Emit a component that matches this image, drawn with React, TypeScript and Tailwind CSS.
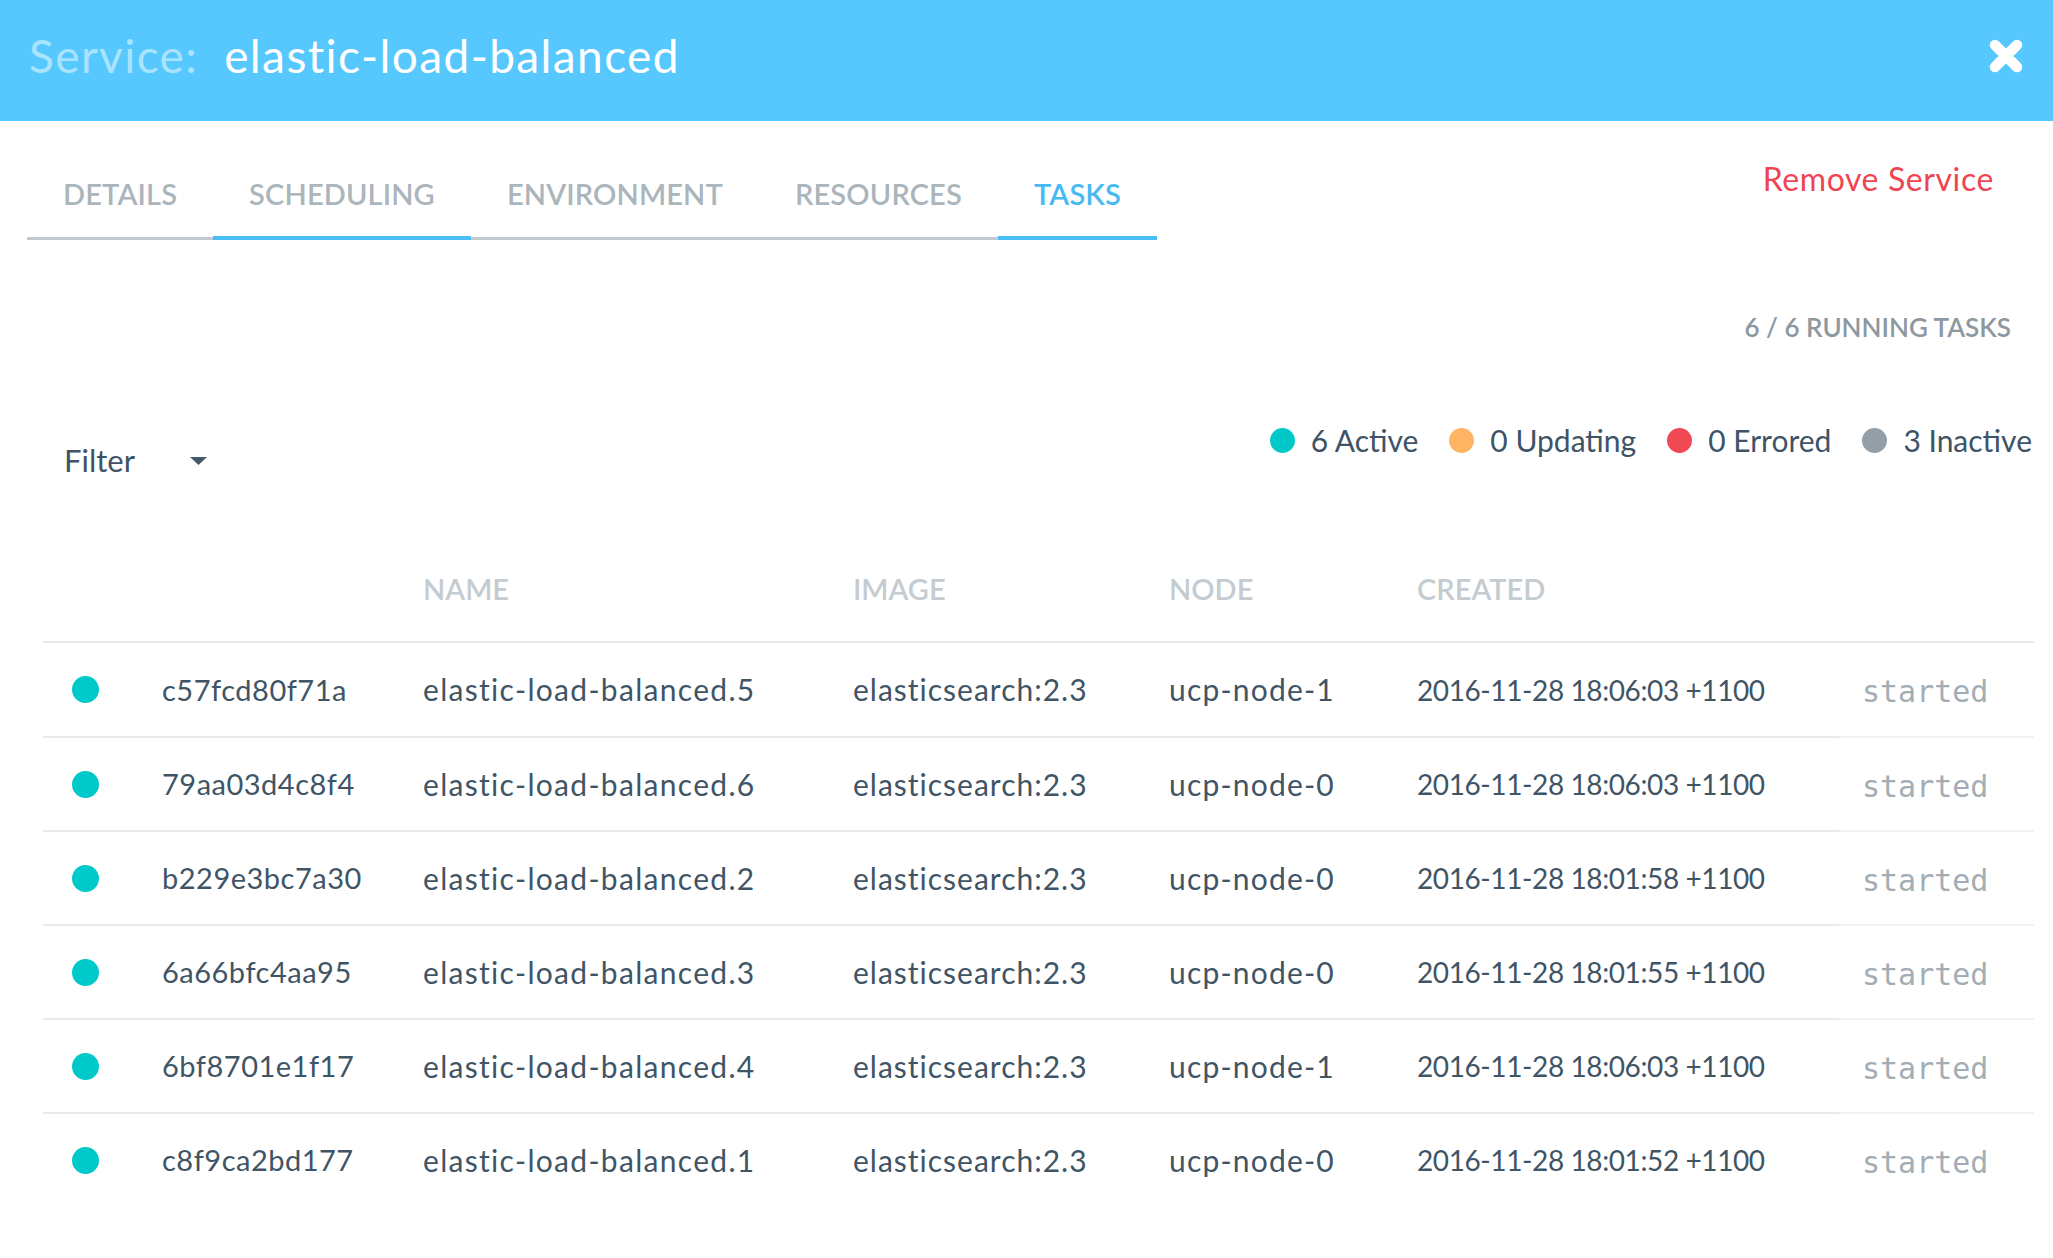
import React from "react";

const tabs = ["DETAILS", "SCHEDULING", "ENVIRONMENT", "RESOURCES", "TASKS"];

const legend = [
  { label: "6 Active", color: "bg-[#00c8c9]" },
  { label: "0 Updating", color: "bg-[#ffb463]" },
  { label: "0 Errored", color: "bg-[#f04855]" },
  { label: "3 Inactive", color: "bg-[#949ea7]" },
];

const tasks = [
  { id: "c57fcd80f71a", name: "elastic-load-balanced.5", node: "ucp-node-1", created: "2016-11-28 18:06:03 +1100" },
  { id: "79aa03d4c8f4", name: "elastic-load-balanced.6", node: "ucp-node-0", created: "2016-11-28 18:06:03 +1100" },
  { id: "b229e3bc7a30", name: "elastic-load-balanced.2", node: "ucp-node-0", created: "2016-11-28 18:01:58 +1100" },
  { id: "6a66bfc4aa95", name: "elastic-load-balanced.3", node: "ucp-node-0", created: "2016-11-28 18:01:55 +1100" },
  { id: "6bf8701e1f17", name: "elastic-load-balanced.4", node: "ucp-node-1", created: "2016-11-28 18:06:03 +1100" },
  { id: "c8f9ca2bd177", name: "elastic-load-balanced.1", node: "ucp-node-0", created: "2016-11-28 18:01:52 +1100" },
];

const cols = "grid grid-cols-[119px_261px_430px_316px_248px_422px_195px]";

const CloseIcon = () => (
  <svg width="36" height="36" viewBox="0 0 36 36" className="mb-[10px]">
    <path d="M7 7 L29 29 M29 7 L7 29" stroke="white" strokeWidth="10.5" strokeLinecap="round" />
  </svg>
);

export default function App() {
  return (
    <div className="w-[2053px] h-[1258px] bg-white overflow-hidden font-['Lato',sans-serif]">
      {/* Header */}
      <div className="h-[121px] bg-[#56c8fe] flex items-center justify-between pl-[29px] pr-[29px]">
        <div className="flex items-baseline text-[46px] leading-none tracking-[1.4px] mb-[10px]">
          <span className="text-[#a9e3fd]">Service:</span>
          <span className="text-white ml-[26px]">elastic-load-balanced</span>
        </div>
        <CloseIcon />
      </div>

      {/* Tabs */}
      <div className="flex items-start justify-between pt-[31px] pl-[27px] pr-[59px]">
        <div className="flex border-b-[3px] border-[#c2c9ce]">
          {tabs.map((t) => {
            const active = t === "SCHEDULING" || t === "TASKS";
            return (
              <div
                key={t}
                className={
                  "h-[88px] -mb-[3px] px-[36px] flex items-center border-b-4 text-[29px] tracking-[0.15px] font-semibold " +
                  (active ? "border-[#4bbef5] " : "border-transparent ") +
                  (t === "TASKS" ? "text-[#47b9f3]" : "text-[#abb5bc]")
                }
              >
                {t}
              </div>
            );
          })}
        </div>
        <div className="mt-[9px] text-[32px] tracking-[0.6px] leading-[36px] text-[#ef4452]">Remove Service</div>
      </div>

      {/* Running tasks */}
      <div className="mt-[69px] pr-[42px] flex justify-end">
        <span className="text-[26px] leading-[36px] font-semibold text-[#8d98a1]">6 / 6 RUNNING TASKS</span>
      </div>

      {/* Filter + legend */}
      <div className="flex justify-between items-start pl-[64px] pr-[21px]">
        <div className="mt-[97px] flex items-center text-[31px] leading-[36px] text-[#3e5466]">
          <span>Filter</span>
          <svg width="17" height="8" viewBox="0 0 17 8" className="ml-[55px] mt-[1px]">
            <path d="M0 0 H17 L8.5 8 Z" fill="#44596a" />
          </svg>
        </div>
        <div className="mt-[77px] flex items-center text-[30px] leading-[36px] text-[#3e5466]">
          {legend.map((l, i) => (
            <div key={l.label} className={"flex items-center " + (i > 0 ? "ml-[31px]" : "")}>
              <span className={"w-[25px] h-[25px] rounded-full " + l.color} />
              <span className="ml-[16px]">{l.label}</span>
            </div>
          ))}
        </div>
      </div>

      {/* Table */}
      <div className="ml-[43px] w-[1991px] mt-[63px]">
        <div className={cols + " h-[102px] pb-[4px] items-center border-b-2 border-[#e7e9ea] text-[29px] font-semibold text-[#c4ccd1]"}>
          <div />
          <div />
          <div>NAME</div>
          <div>IMAGE</div>
          <div>NODE</div>
          <div>CREATED</div>
          <div />
        </div>
        {tasks.map((t, i) => {
          const line = i > 0 ? "border-t-2 border-[#e7e9ea]" : "";
          const light = i > 0 ? "border-t-2 border-[#f2f3f4]" : "";
          return (
            <div key={t.id} className={cols + " text-[#3f5566]"}>
              <div className={"flex items-center pl-[29px] " + (i > 0 ? "h-[94px] " : "h-[93px] ") + line}>
                <span className="w-[27px] h-[27px] rounded-full bg-[#00c9ca]" />
              </div>
              <div className={"flex items-center text-[29px] tracking-[0.5px] " + line}>{t.id}</div>
              <div className={"flex items-center text-[30px] tracking-[1.3px] " + line}>{t.name}</div>
              <div className={"flex items-center text-[30px] tracking-[1px] " + line}>elasticsearch:2.3</div>
              <div className={"flex items-center text-[30px] tracking-[1.2px] " + line}>{t.node}</div>
              <div className={"flex items-center text-[28px] tracking-[-0.4px] " + line}>{t.created}</div>
              <div className={"flex items-center pl-[23px] pt-[4px] font-['DejaVu_Sans_Mono',monospace] text-[30px] text-[#a3adb5] " + light}>
                started
              </div>
            </div>
          );
        })}
      </div>
    </div>
  );
}
